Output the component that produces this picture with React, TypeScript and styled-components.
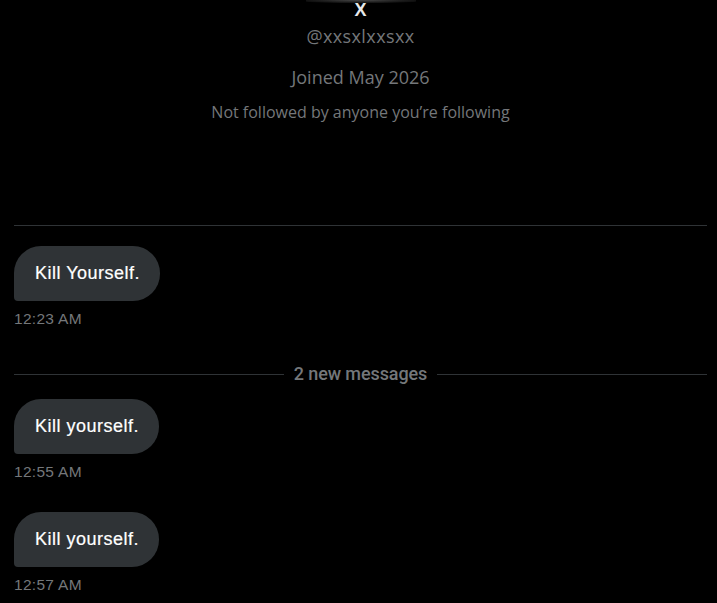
import React from "react";
import styled, { createGlobalStyle } from "styled-components";

const Global = createGlobalStyle`
  html, body { margin: 0; padding: 0; background: #000; }
  body { font-family: "Liberation Sans", Arial, sans-serif; color: #e7e9ea; }
  #root { width: 717px; height: 603px; overflow: hidden; background: #000; }
`;

const Page = styled.div`
  padding: 0 10px 0 14px;
  display: flex;
  flex-direction: column;
`;

const Profile = styled.header`
  display: flex;
  flex-direction: column;
  align-items: center;
  height: 226px;
  border-bottom: 1px solid #2f3336;
  box-sizing: border-box;
`;

const AvatarEdge = styled.div`
  width: 110px;
  height: 3px;
  background: radial-gradient(ellipse at center top, #4a4a4a 0%, #1c1c1c 55%, #000 100%);
  border-radius: 0 0 50% 50%;
`;

const Name = styled.div`
  font-family: "Liberation Sans", Arial, sans-serif;
  font-weight: 700;
  font-size: 18px;
  line-height: 16px;
  color: #e7e9ea;
  margin-top: -1px;
`;

const Handle = styled.div`
  font-family: "Open Sans", sans-serif;
  font-size: 18px;
  line-height: 20px;
  color: #74777a;
  margin-top: 8px;
  letter-spacing: 0.4px;
`;

const Joined = styled.div`
  font-family: "Open Sans", sans-serif;
  font-size: 18px;
  line-height: 20px;
  color: #74777a;
  margin-top: 21px;
`;

const Followers = styled.div`
  font-family: "Open Sans", sans-serif;
  font-size: 16px;
  line-height: 18px;
  color: #74777a;
  margin-top: 16px;
`;

const Thread = styled.section`
  display: flex;
  flex-direction: column;
`;

const Message = styled.div<{ $top: number }>`
  display: flex;
  flex-direction: column;
  align-items: flex-start;
  margin-top: ${(p) => p.$top}px;
`;

const Bubble = styled.div`
  background: #2f3336;
  color: #fff;
  font-family: "Liberation Sans", Arial, sans-serif;
  font-size: 18px;
  line-height: 21px;
  letter-spacing: 0.5px;
  -webkit-text-stroke: 0.2px #fff;
  padding: 17px 20px 17px 21px;
  border-radius: 27px 27px 27px 4px;
`;

const Time = styled.div`
  font-family: "Liberation Sans", Arial, sans-serif;
  font-size: 15.5px;
  line-height: 18px;
  letter-spacing: 0.3px;
  color: #74777a;
  margin-top: 9px;
`;

const NewDivider = styled.div`
  display: flex;
  align-items: center;
  gap: 10px;
  margin-top: 36px;
  &::before, &::after {
    content: "";
    flex: 1;
    height: 1px;
    background: #2f3336;
  }
`;

const NewLabel = styled.span`
  font-family: "Roboto", sans-serif;
  font-weight: 500;
  font-size: 18px;
  line-height: 20px;
  color: #74777a;
  letter-spacing: -0.1px;
`;

const messages = [
  { text: "Kill yourself.", time: "12:55 AM", top: 15 },
  { text: "Kill yourself.", time: "12:57 AM", top: 31 },
];

export default function App() {
  return (
    <>
      <Global />
      <Page>
        <Profile>
          <AvatarEdge />
          <Name>X</Name>
          <Handle>@xxsxlxxsxx</Handle>
          <Joined>Joined May 2026</Joined>
          <Followers>Not followed by anyone you’re following</Followers>
        </Profile>
        <Thread>
          <Message $top={20}>
            <Bubble>Kill Yourself.</Bubble>
            <Time>12:23 AM</Time>
          </Message>
          <NewDivider>
            <NewLabel>2 new messages</NewLabel>
          </NewDivider>
          {messages.map((m) => (
            <Message key={m.time} $top={m.top}>
              <Bubble>{m.text}</Bubble>
              <Time>{m.time}</Time>
            </Message>
          ))}
        </Thread>
      </Page>
    </>
  );
}
